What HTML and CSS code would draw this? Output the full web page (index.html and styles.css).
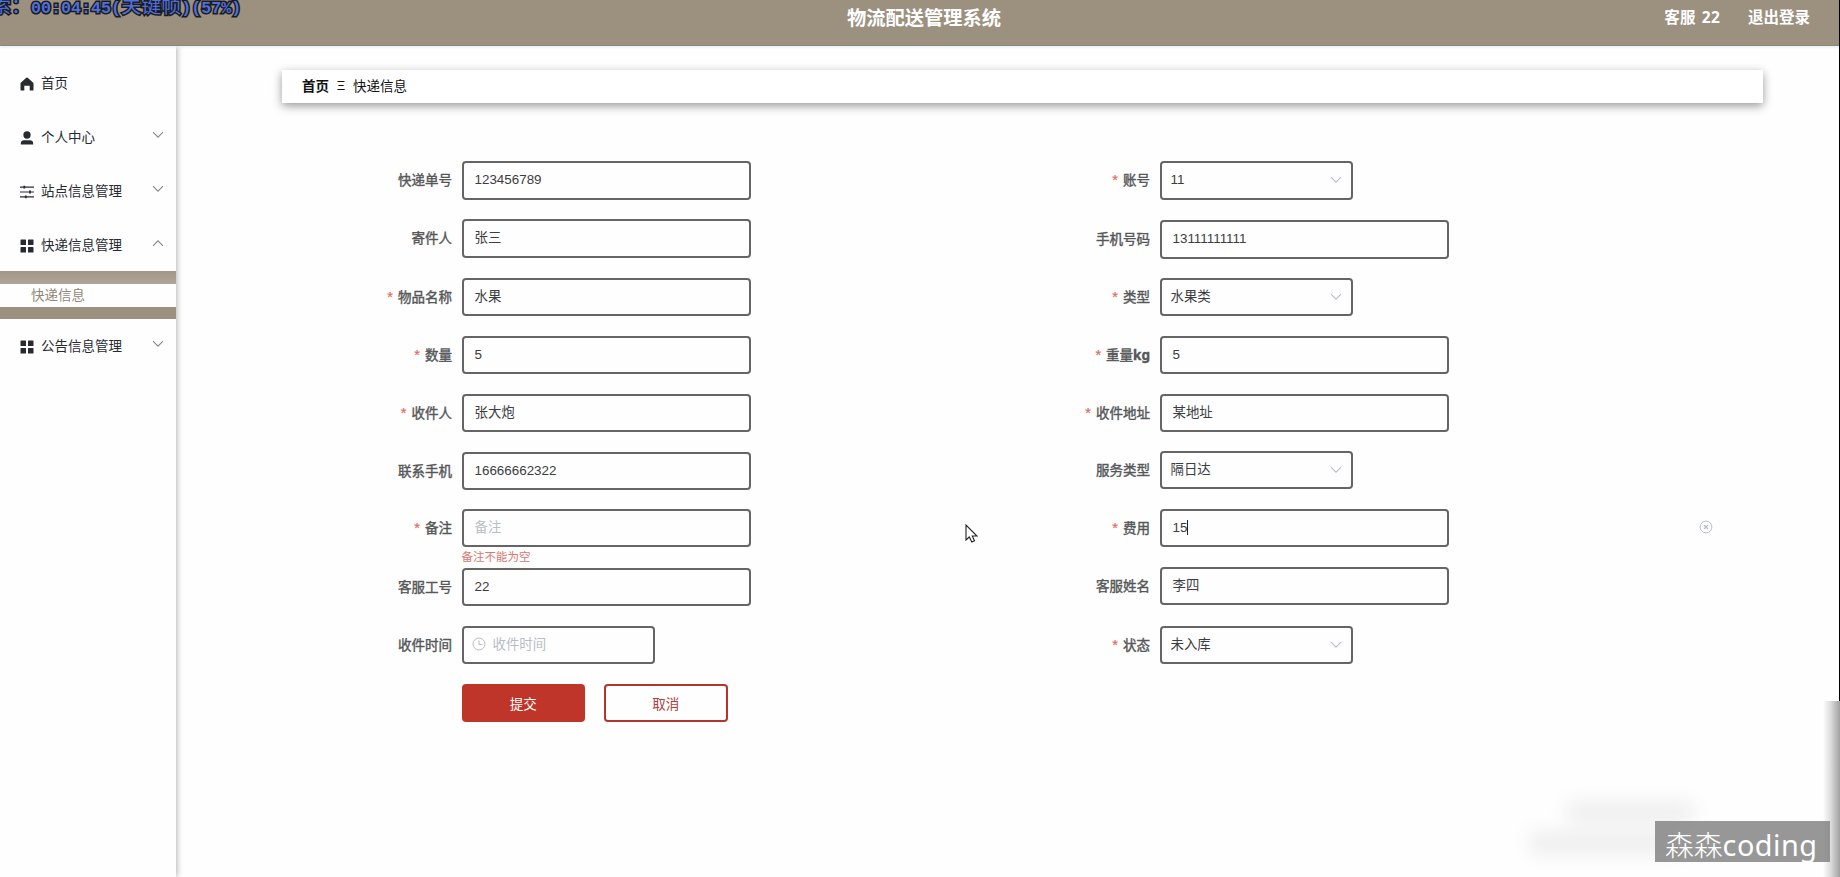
FILE: index.html
```html
<!DOCTYPE html>
<html lang="zh-CN">
<head>
<meta charset="utf-8">
<title>物流配送管理系统</title>
<link rel="stylesheet" href="styles.css">
</head>
<body>
<svg class="defs" aria-hidden="true">
  <symbol id="down" viewBox="0 0 12 8"><path d="M1 1.2l5 5 5-5" fill="none" stroke="currentColor" stroke-width="1.1"/></symbol>
  <symbol id="grid" viewBox="0 0 14 14"><path fill="currentColor" d="M1 .5h4.500q.5 0 .5.500v4.500q0 .5-.5.500H1q-.5 0-.5-.5V1q0-.5.5-.5zM8.500.5H13q.5 0 .5.500v4.500q0 .5-.5.500H8.500q-.5 0-.5-.5V1q0-.5.500-.5zM1 8h4.500q.5 0 .5.500V13q0 .5-.5.500H1q-.5 0-.5-.5V8.500q0-.5.500-.5zM8.500 8H13q.5 0 .5.500V13q0 .5-.5.500H8.500q-.5 0-.5-.5V8.500q0-.5.500-.5z"/></symbol>
</svg>
<div class="app">
  <header class="header">
    <h1 class="title">物流配送管理系统</h1>
    <div class="account"><span>客服 22</span><span>退出登录</span></div>
  </header>
  <div class="body">
    <nav class="sidebar">
      <div class="item"><svg class="ico" viewBox="0 0 14 14"><path fill="currentColor" d="M7 .5Q7.400.5 7.700.8L13 5.500q.5.500.5 1.200V13q0 .5-.5.500H9.700V8.700H4.300v4.800H1q-.5 0-.5-.5V6.700q0-.7.500-1.200L6.300.8Q6.600.5 7 .5z"/></svg><span>首页</span></div>
      <div class="item"><svg class="ico" viewBox="0 0 14 15"><circle cx="7" cy="4.300" r="3.900" fill="currentColor"/><path fill="currentColor" d="M.4 14.500v-1.200Q.4 9.800 4 9.800h6q3.600 0 3.600 3.500v1.200z"/></svg><span>个人中心</span><svg class="caret"><use href="#down"/></svg></div>
      <div class="item"><svg class="ico" viewBox="0 0 14 14"><path d="M0 2.200h14M0 7h14M0 11.800h14" stroke="currentColor" stroke-width="1.200"/><path d="M4.300.8v2.800M10 5.600v2.800M5.800 10.400v2.800" stroke="currentColor" stroke-width="1.800"/></svg><span>站点信息管理</span><svg class="caret"><use href="#down"/></svg></div>
      <div class="item"><svg class="ico"><use href="#grid"/></svg><span>快递信息管理</span><svg class="caret up"><use href="#down"/></svg></div>
      <div class="submenu"><div class="subitem">快递信息</div></div>
      <div class="item"><svg class="ico"><use href="#grid"/></svg><span>公告信息管理</span><svg class="caret"><use href="#down"/></svg></div>
    </nav>
    <main class="main">
      <div class="crumb"><b>首页</b><span class="sep">Ξ</span><span>快递信息</span></div>
      <form class="form">
        <div class="col left">
          <div class="row"><label>快递单号</label><div class="input">123456789</div></div>
          <div class="row"><label>寄件人</label><div class="input">张三</div></div>
          <div class="row"><label class="req">物品名称</label><div class="input">水果</div></div>
          <div class="row"><label class="req">数量</label><div class="input">5</div></div>
          <div class="row"><label class="req">收件人</label><div class="input">张大炮</div></div>
          <div class="row"><label>联系手机</label><div class="input">16666662322</div></div>
          <div class="row"><label class="req">备注</label><div class="input hint">备注</div><div class="error">备注不能为空</div></div>
          <div class="row"><label>客服工号</label><div class="input">22</div></div>
          <div class="row"><label>收件时间</label><div class="input short date hint"><svg class="clock" viewBox="0 0 14 14"><circle cx="7" cy="7" r="6" fill="none" stroke="currentColor"/><path d="M7 3.500V7.500h3.500" fill="none" stroke="currentColor"/></svg>收件时间</div></div>
          <div class="row buttons"><div class="btn primary">提交</div><div class="btn">取消</div></div>
        </div>
        <div class="col right">
          <div class="row"><label class="req">账号</label><div class="input short">11<svg class="arrow"><use href="#down"/></svg></div></div>
          <div class="row"><label>手机号码</label><div class="input">13111111111</div></div>
          <div class="row"><label class="req">类型</label><div class="input short">水果类<svg class="arrow"><use href="#down"/></svg></div></div>
          <div class="row"><label class="req">重量<b>kg</b></label><div class="input">5</div></div>
          <div class="row"><label class="req">收件地址</label><div class="input">某地址</div></div>
          <div class="row"><label>服务类型</label><div class="input short">隔日达<svg class="arrow"><use href="#down"/></svg></div></div>
          <div class="row"><label class="req">费用</label><div class="input">15<i class="text-caret"></i></div><svg class="clear" viewBox="0 0 14 14"><circle cx="7" cy="7" r="5.900" fill="none" stroke="currentColor"/><path d="M5 5l4 4M9 5l-4 4" stroke="currentColor" stroke-width="1.300"/></svg></div>
          <div class="row"><label>客服姓名</label><div class="input">李四</div></div>
          <div class="row"><label class="req">状态</label><div class="input short">未入库<svg class="arrow"><use href="#down"/></svg></div></div>
        </div>
      </form>
    </main>
  </div>
</div>
<div class="osd"><span>索：</span><span class="mono">00:04:45(</span><span>关键帧</span><span class="mono">)(57%)</span></div>
<svg class="cursor" viewBox="0 0 13 19"><path d="M1 1v15l3.300-3 2.500 5 2.700-1.200L7.300 12H12z" fill="#fff" stroke="#222" stroke-width="1.100"/></svg>
<div class="smudge one"></div>
<div class="smudge two"></div>
<div class="edge-line"></div>
<div class="edge-shade"></div>
<div class="mark"><span class="mark-cjk">森森</span><span>coding</span></div>
</body>
</html>
```
FILE: styles.css
```css
* { box-sizing: border-box; }
body {
  margin: 0;
  height: 877px;
  overflow: hidden;
  position: relative;
  background: #fefefe;
  color: #303133;
  font: 13.5px/20px "Noto Sans", "Noto Sans CJK SC", sans-serif;
}
.defs { position: absolute; width: 0; height: 0; }
.app { display: flex; flex-direction: column; height: 877px; }

.header {
  display: grid;
  grid-template-columns: 1fr auto 1fr;
  flex: none;
  height: 46px;
  padding: 4px 30px 0 8px;
  background: #9c917f;
  border-bottom: 1px solid #8f8678;
  box-shadow: 0 1px 3px #d5ecf8;
  color: #fff;
  z-index: 1;
}
.title { grid-column: 2; margin: 0; font-size: 19.3px; line-height: 28px; padding-left: 30px; }
.account { display: flex; justify-content: flex-end; gap: 28px; font-size: 15.5px; line-height: 26px; font-weight: bold; }
.account span:first-child { word-spacing: 2px; letter-spacing: .2px; }

.body { display: flex; flex: 1; min-height: 0; }
.sidebar {
  width: 176px;
  flex: none;
  padding-top: 10px;
  background: #fefefe;
  box-shadow: 1px 0 6px rgba(0, 0, 0, .3);
}
.item { display: flex; align-items: center; height: 54px; padding: 0 12px 0 20px; color: #272b30; }
.item span { flex: 1; margin-left: 7px; }
.ico { width: 14px; height: 14px; margin-top: 1px; }
.caret { width: 12px; height: 8px; color: #85888d; margin-top: -4px; }
.caret.up { transform: rotate(180deg); }
.submenu {
  height: 48px;
  margin-top: -1px;
  padding: 13px 0 12px;
  background: linear-gradient(#a19687, #b0a598 13px, #9c917f 14px);
}
.subitem { height: 23px; padding-left: 31px; background: #fefefe; color: #928877; line-height: 22px; }

.main { flex: 1; padding: 24px 77px 0 106px; }
.crumb {
  display: flex;
  align-items: center;
  height: 33px;
  padding: 0 0 2px 20px;
  background: #fff;
  box-shadow: 0 3px 9px rgba(0, 0, 0, .4);
  color: #111;
}
.sep { width: 24px; text-align: center; font: 13px "Liberation Sans", sans-serif; }

.form { display: flex; padding-top: 58px; color: #444649; }
.col { display: grid; width: 698px; align-content: start; padding-left: 81px; }
.left { grid-template-rows: 58px 58.500px 58px 58px 58px 57px 59px 58px 58px 40px; }
.right { grid-template-rows: 59px 57.500px 58px 58px 57px 58px 58px 59px 40px; }
.row { display: flex; position: relative; height: 39px; }
label {
  width: 89px;
  margin-right: 9.500px;
  text-align: right;
  line-height: 38px;
  color: #555759;
  -webkit-text-stroke: .4px;
}
.req::before { content: "*"; color: #e06a5e; margin-right: 5px; font: 14.5px "Liberation Sans", sans-serif; -webkit-text-stroke: .2px; }
.input {
  display: flex;
  align-items: center;
  width: 289px;
  height: 38.500px;
  padding: 0 11px;
  border: 2px solid #656565;
  border-radius: 4px;
  background: #fefefe;
  color: #3b3d40;
  font-family: "Liberation Sans", "Noto Sans CJK SC", sans-serif;
  font-size: 13.4px;
}
.short { width: 193px; padding: 0 9px; }
.hint { color: #b8bdc8; }
.arrow { width: 12px; height: 8px; margin-left: auto; color: #b8bdc8; }
.clock { width: 14px; height: 14px; margin: -2px 7px 0 -2px; }
.date { padding-left: 10px; }
.text-caret { width: 1px; height: 15px; background: #222; }
.clear { width: 14px; height: 14px; margin: 11px 0 0 250px; color: #b8bdc8; }
.error { position: absolute; left: 98.500px; top: 41px; font-size: 11.5px; line-height: 14px; color: #d97970; }
.buttons { padding-left: 98.500px; gap: 19px; }
.btn {
  width: 123.500px;
  height: 38.500px;
  border: 2px solid #b3362d;
  border-radius: 4px;
  background: #fefefe;
  color: #ab433b;
  text-align: center;
  line-height: 36px;
}
.primary { background: #bf3529; border-color: #bf3529; color: #fff; }

.osd {
  position: absolute;
  left: -9px;
  top: -9px;
  display: flex;
  align-items: baseline;
  color: #4f70dc;
  font: 20px/28px "Noto Sans CJK SC", sans-serif;
  -webkit-text-stroke: 3px #1b1b20;
  paint-order: stroke fill;
  white-space: pre;
  z-index: 2;
}
.mono { font: bold 16.7px/28px "Liberation Mono", monospace; }
.cursor { position: absolute; left: 965px; top: 524px; width: 13px; height: 19px; }
.smudge { position: absolute; background: rgba(0, 0, 0, .06); filter: blur(9px); }
.one { left: 1567px; top: 801px; width: 127px; height: 22px; }
.two { left: 1530px; top: 831px; width: 150px; height: 24px; }
.edge-line { position: absolute; right: 0; top: 0; width: 1px; height: 701px; background: #000; z-index: 2; }
.edge-shade { position: absolute; right: 0; top: 701px; width: 17px; height: 176px; background: linear-gradient(90deg, rgba(120, 120, 120, 0), rgba(120, 120, 120, .25) 45%, rgba(110, 110, 110, .65)); }
.mark {
  position: absolute;
  left: 1655px;
  top: 821px;
  display: flex;
  align-items: baseline;
  width: 175px;
  height: 41px;
  padding-left: 10px;
  background: rgba(128, 128, 128, .82);
  color: #fff;
  font: 28.800px/45px "Noto Sans", sans-serif;
  letter-spacing: .5px;
}
.mark-cjk { font-family: "Noto Sans CJK SC", sans-serif; font-weight: 300; letter-spacing: 0; }
```
